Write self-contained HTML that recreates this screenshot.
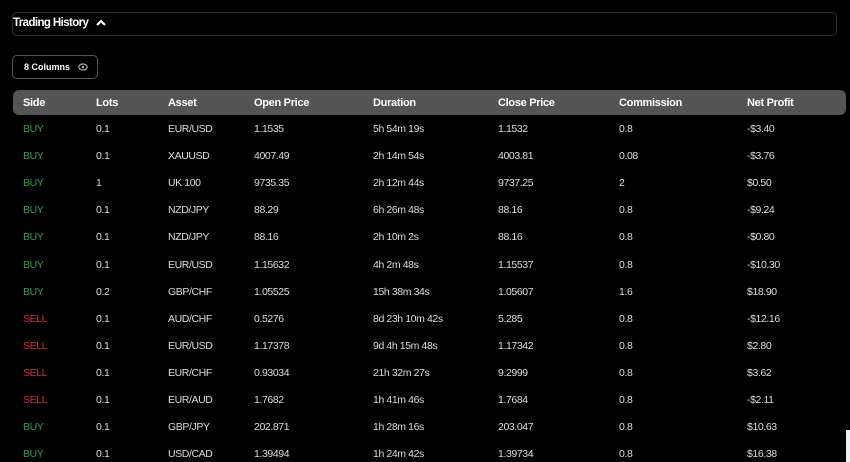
<!DOCTYPE html>
<html><head><meta charset="utf-8"><style>
body{margin:0;background:#000;width:850px;height:462px;overflow:hidden;font-family:"Liberation Sans",sans-serif;color:#ddd;position:relative}
.top{position:absolute;left:12px;top:12px;width:823px;height:22px;border:1px solid #2e2e2e;border-radius:5px}
.top span{position:absolute;left:0;top:4px;font-size:11.5px;font-weight:bold;color:#fff;letter-spacing:-0.6px}
.btn{position:absolute;left:12px;top:55px;width:84px;height:22px;border:1px solid #555;border-radius:5px}
.btn span{position:absolute;left:11px;top:6px;font-size:9px;font-weight:bold;color:#fff}
.th{position:absolute;left:13px;top:90px;width:833px;height:25px;background:#545454;border-radius:6px}
.c{position:absolute;font-size:10.5px;white-space:nowrap;letter-spacing:-0.4px}
.h{font-weight:bold;color:#fff;font-size:11px;top:7px;letter-spacing:-0.3px}
.g{color:#2fa04a}.r{color:#d8283a}
</style></head><body>
<div class="top"><span>Trading History</span>
<svg style="position:absolute;left:83px;top:6px" width="10" height="8" viewBox="0 0 10 8"><path d="M1 6 L5 2 L9 6" stroke="#fff" stroke-width="2.2" fill="none"/></svg></div>
<div class="btn"><span>8 Columns</span>
<svg style="position:absolute;left:65px;top:7px" width="10" height="8" viewBox="0 0 10 8"><ellipse cx="5" cy="4" rx="4.2" ry="3" stroke="#aaa" stroke-width="1.2" fill="none"/><circle cx="5" cy="4" r="1.3" fill="#aaa"/></svg></div>
<div class="th">
<div class="c h" style="left:10px">Side</div><div class="c h" style="left:83px">Lots</div><div class="c h" style="left:155px">Asset</div><div class="c h" style="left:241px">Open Price</div><div class="c h" style="left:360px">Duration</div><div class="c h" style="left:485px">Close Price</div><div class="c h" style="left:606px">Commission</div><div class="c h" style="left:734px">Net Profit</div>
</div>
<div id="rows"></div>
<div style="position:absolute;left:846px;top:430px;width:4px;height:32px;background:#eee"></div>
<script>
var d=[["BUY","0.1","EUR/USD","1.1535","5h 54m 19s","1.1532","0.8","-$3.40"],
["BUY","0.1","XAUUSD","4007.49","2h 14m 54s","4003.81","0.08","-$3.76"],
["BUY","1","UK 100","9735.35","2h 12m 44s","9737.25","2","$0.50"],
["BUY","0.1","NZD/JPY","88.29","6h 26m 48s","88.16","0.8","-$9.24"],
["BUY","0.1","NZD/JPY","88.16","2h 10m 2s","88.16","0.8","-$0.80"],
["BUY","0.1","EUR/USD","1.15632","4h 2m 48s","1.15537","0.8","-$10.30"],
["BUY","0.2","GBP/CHF","1.05525","15h 38m 34s","1.05607","1.6","$18.90"],
["SELL","0.1","AUD/CHF","0.5276","8d 23h 10m 42s","5.285","0.8","-$12.16"],
["SELL","0.1","EUR/USD","1.17378","9d 4h 15m 48s","1.17342","0.8","$2.80"],
["SELL","0.1","EUR/CHF","0.93034","21h 32m 27s","9.2999","0.8","$3.62"],
["SELL","0.1","EUR/AUD","1.7682","1h 41m 46s","1.7684","0.8","-$2.11"],
["BUY","0.1","GBP/JPY","202.871","1h 28m 16s","203.047","0.8","$10.63"],
["BUY","0.1","USD/CAD","1.39494","1h 24m 42s","1.39734","0.8","$16.38"]];
var x=[23,96,168,254,373,498,619,747],h="";
d.forEach(function(r,i){var y=123+i*27.1;r.forEach(function(v,j){var cl=j==0?(v=="BUY"?"g":"r"):"";h+='<div class="c '+cl+'" style="left:'+x[j]+'px;top:'+y+'px">'+v+'</div>';});});
document.getElementById("rows").innerHTML=h;
</script>
</body></html>
